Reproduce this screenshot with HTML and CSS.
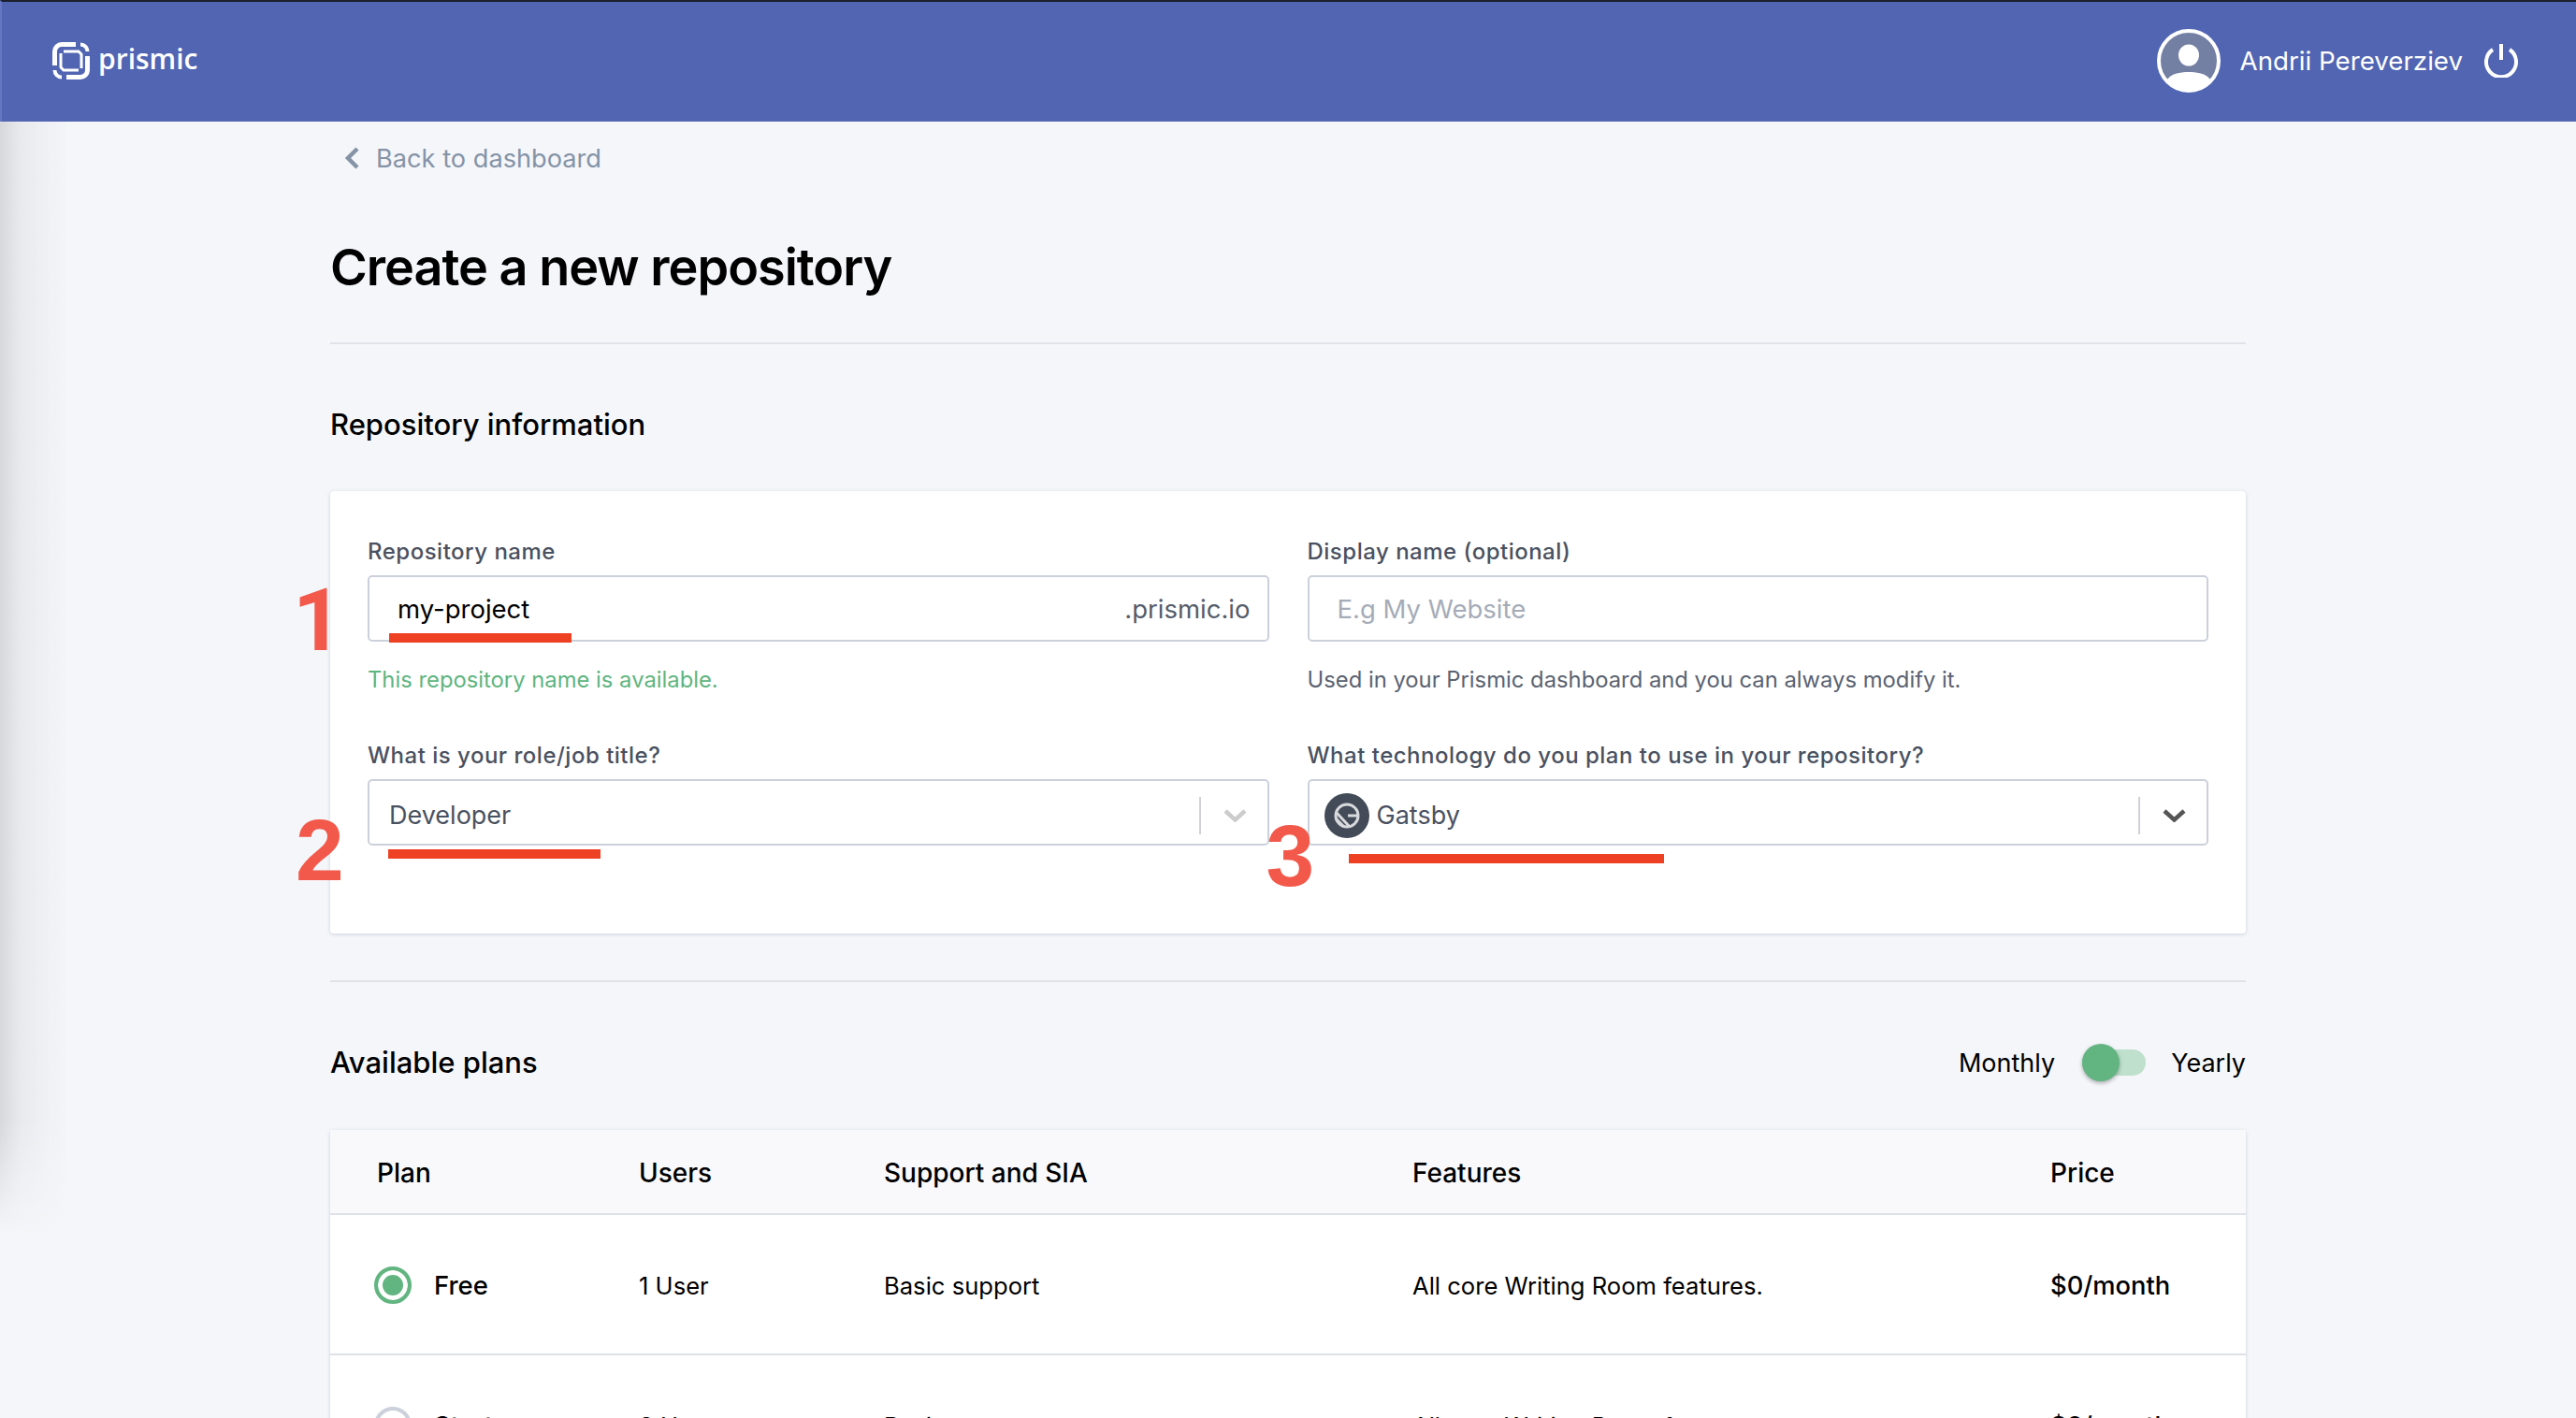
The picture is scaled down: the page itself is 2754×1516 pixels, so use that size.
FILE: index.html
```html
<!DOCTYPE html>
<html lang="en">
<head>
	<meta charset="UTF-8">
	<title>Create a new repository</title>
	<link rel="stylesheet" href="styles.css">
</head>
<body>
	<header class="topbar">
		<a class="brand">
			<svg class="brand-icon" viewBox="0 0 40 40" fill="none" stroke="#fff" stroke-width="5">
				<path d="M2.500 25V10a7.500 7.500 0 0 1 7.500-7.500h15"/>
				<path d="M15 37.500h15a7.500 7.500 0 0 0 7.500-7.500V15"/>
				<path d="M30 2.500a7.500 7.500 0 0 1 7.500 7.500M10 37.500a7.500 7.500 0 0 1-7.500-7.500" stroke-width="4"/>
				<path d="M12 10h16l3 3v15M28 30H12l-3-3V12" stroke-width="3"/>
			</svg>
			<span class="brand-name">prismic</span>
		</a>
		<div class="user">
			<svg class="avatar" viewBox="0 0 68 68">
				<circle cx="34" cy="34" r="32" fill="#737fa3" stroke="#fff" stroke-width="4"/>
				<ellipse cx="34" cy="28" rx="11" ry="11.500" fill="#fff"/>
				<path d="M11 54c4-6 13-8 23-8s19 2 23 8c-5 7-13 11-23 11s-18-4-23-11z" fill="#fff"/>
			</svg>
			<span class="user-name">Andrii Pereverziev</span>
			<svg class="power" viewBox="0 0 36 36" fill="none" stroke="#fff" stroke-width="4">
				<path d="M18 0v17"/>
				<path d="M9 6a16 16 0 1 0 18 0"/>
			</svg>
		</div>
	</header>

	<div class="side-shade"></div>

	<main class="page">
		<a class="back">
			<svg class="back-icon" viewBox="0 0 18 24" fill="none" stroke="#8593a6" stroke-width="4.500">
				<path d="M15 2 5 12l10 10"/>
			</svg>
			Back to dashboard
		</a>
		<h1 class="title">Create a new repository</h1>

		<section class="section">
			<h2 class="section-title">Repository information</h2>
			<div class="card form">
				<div class="field">
					<label class="label">Repository name</label>
					<div class="input">
						<span class="input-value">my-project</span>
						<span class="input-suffix">.prismic.io</span>
					</div>
					<p class="hint hint-ok">This repository name is available.</p>
					<span class="mark mark-1"></span>
					<span class="num num-1">1</span>
				</div>
				<div class="field">
					<label class="label">Display name (optional)</label>
					<div class="input">
						<span class="input-holder">E.g My Website</span>
					</div>
					<p class="hint">Used in your Prismic dashboard and you can always modify it.</p>
				</div>
				<div class="field">
					<label class="label">What is your role/job title?</label>
					<div class="select">
						<span class="select-value">Developer</span>
						<span class="select-sep"></span>
						<svg class="chev" viewBox="0 0 25 14" fill="none" stroke="#cccccc" stroke-width="4.500"><path d="M2 2l10.500 9.500L23 2"/></svg>
					</div>
					<span class="mark mark-2"></span>
					<span class="num num-2">2</span>
				</div>
				<div class="field">
					<label class="label">What technology do you plan to use in your repository?</label>
					<div class="select select-tech">
						<svg class="tech-icon" viewBox="0 0 48 48">
							<circle cx="24" cy="24" r="24" fill="#434b58"/>
							<circle cx="24" cy="24" r="12" fill="none" stroke="#d8d9dc" stroke-width="3"/>
							<path d="M13 21l14 15M12 27l9 9M25 24h10" fill="none" stroke="#d8d9dc" stroke-width="3"/>
						</svg>
						<span class="select-value">Gatsby</span>
						<span class="select-sep"></span>
						<svg class="chev" viewBox="0 0 25 14" fill="none" stroke="#555" stroke-width="4.500"><path d="M2 2l10.500 9.500L23 2"/></svg>
					</div>
					<span class="mark mark-3"></span>
					<span class="num num-3">3</span>
				</div>
			</div>
		</section>

		<section class="section section-plans">
			<div class="plans-head">
				<h2 class="section-title">Available plans</h2>
				<div class="billing">
					<span>Monthly</span>
					<span class="switch"><span class="switch-knob"></span></span>
					<span>Yearly</span>
				</div>
			</div>
			<div class="card plans">
				<div class="row row-head">
					<span>Plan</span>
					<span>Users</span>
					<span>Support and SIA</span>
					<span>Features</span>
					<span>Price</span>
				</div>
				<div class="row">
					<span class="plan-name"><i class="radio radio-on"></i>Free</span>
					<span>1 User</span>
					<span>Basic support</span>
					<span>All core Writing Room features.</span>
					<span class="price">$0/month</span>
				</div>
				<div class="row">
					<span class="plan-name"><i class="radio"></i>Starter</span>
					<span>3 Users</span>
					<span>Basic support</span>
					<span>All core Writing Room features.</span>
					<span class="price">$9/month</span>
				</div>
			</div>
		</section>
	</main>
</body>
</html>
```

FILE: styles.css
```css
* {margin: 0;padding: 0;box-sizing: border-box;}
html, body {height: 100%;}
body {background: #f4f6fa;font-family: Inter, "Liberation Sans", sans-serif;color: #000;height: 1516px;overflow: hidden;position: relative;}

.topbar {height: 130px;background: #5165b3;border-top: 2px solid #1c1f2e;border-left: 2px solid #6477c0;display: flex;align-items: center;justify-content: space-between;padding: 0 62px 2px 54px;}
.brand {display: flex;align-items: center;gap: 9px;}
.brand-icon {width: 40px;height: 40px;}
.brand-name {color: #fff;font-family: "Open Sans", sans-serif;font-size: 30px;font-weight: 600;position: relative;top: -3px;}
.user {display: flex;align-items: center;}
.avatar {width: 68px;height: 68px;}
.user-name {color: #fff;font-size: 27.7px;margin-left: 21px;margin-right: 23px;}
.power {width: 36px;height: 36px;}

.side-shade {position: absolute;left: 0;top: 130px;width: 72px;height: 1190px;background: linear-gradient(to right, #d6d8db, #e8eaed 22px, #eceef2 40px, rgba(244,246,250,0));-webkit-mask-image: linear-gradient(to bottom, #000 90%, transparent);mask-image: linear-gradient(to bottom, #000 90%, transparent);}

.page {width: 2048px;margin-left: 353px;position: relative;}
.back {display: flex;align-items: center;height: 78px;padding-left: 14px;color: #8593a6;font-size: 27.2px;}
.back-icon {width: 18px;height: 24px;margin-right: 17px;}
.title {font-size: 54px;font-weight: 600;line-height: 66px;margin-top: 45px;padding-bottom: 47px;border-bottom: 2px solid #e0e3e9;letter-spacing: -1px;}

.section-title {font-size: 31px;font-weight: 500;line-height: 40px;}
.section {padding-top: 66px;}
.section > .section-title {margin-bottom: 51px;}
.card {background: #fff;border-radius: 4px;box-shadow: 0 1px 4px rgba(40,50,80,.18);}

.form {display: grid;grid-template-columns: 1fr 1fr;column-gap: 41px;padding: 49px 40px 0;height: 473px;}
.field {position: relative;height: 218px;}
.label {display: block;font-size: 24px;font-weight: 500;line-height: 32px;color: #4a5160;letter-spacing: .5px;margin-bottom: 9px;}
.input, .select {height: 71px;border: 2px solid #cbd0db;border-radius: 5px;background: #fff;display: flex;align-items: center;font-size: 27.5px;}
.input {justify-content: space-between;padding: 0 18px 0 30px;}
.input-value {color: #000;}
.input-suffix {color: #555d6b;}
.input-holder {color: #a5acb8;}
.hint {font-size: 23.8px;line-height: 32px;margin-top: 25px;color: #5b6372;}
.hint-ok {color: #5fb580;}

.select {padding: 6px 0 0 21px;color: #4a5160;font-size: 27px;}
.select-tech {padding-left: 16px;}
.select-value {flex: 1;}
.select-sep {width: 2px;height: 40px;background: #cfd2d8;}
.chev {width: 25px;height: 14px;margin: 0 22px 0 24px;}
.tech-icon {width: 48px;height: 48px;margin-right: 8px;}

.mark {position: absolute;height: 10px;background: #ee4023;}
.mark-1 {left: 23px;width: 195px;top: 103px;}
.mark-2 {left: 22px;width: 227px;top: 116px;}
.mark-3 {left: 44px;width: 337px;top: 121px;}
.num {position: absolute;font-family: "Liberation Sans", sans-serif;font-weight: 700;font-size: 93px;line-height: 90px;color: #f2594a;}
.num-1 {left: -80px;top: 45px;font-family: Roboto, sans-serif;}
.num-2 {left: -77px;top: 72px;}
.num-3 {left: -44px;top: 78px;}

.section-plans {margin-top: 50px;padding-top: 0;border-top: 2px solid #e0e3e9;}
.plans-head {display: flex;align-items: center;justify-content: space-between;height: 158px;padding-top: 14px;}
.billing {display: flex;align-items: center;font-size: 27px;}
.switch {width: 68px;height: 28px;border-radius: 14px;background: #bee0cc;position: relative;margin: 0 27px 0 29px;}
.switch-knob {position: absolute;left: 0;top: -6px;width: 40px;height: 40px;border-radius: 50%;background: #62b581;box-shadow: 0 2px 4px rgba(0,0,0,.3);}

.row {display: grid;grid-template-columns: 280px 262px 565px 682px 1fr;padding: 2px 0 0 50px;height: 150px;align-items: center;font-size: 25.6px;border-bottom: 2px solid #dde1e7;}
.row-head {height: 91px;background: #f9f9fc;font-size: 28px;font-weight: 500;}
.plan-name {font-weight: 500;font-size: 27.5px;display: flex;align-items: center;margin-left: -3px;}
.price {font-weight: 500;font-size: 27.3px;}
.radio {width: 40px;height: 40px;border-radius: 50%;border: 4px solid #cbd0db;margin-right: 24px;flex: none;}
.radio-on {border-color: #62b581;background: #62b581;box-shadow: inset 0 0 0 5px #fff;}
```
